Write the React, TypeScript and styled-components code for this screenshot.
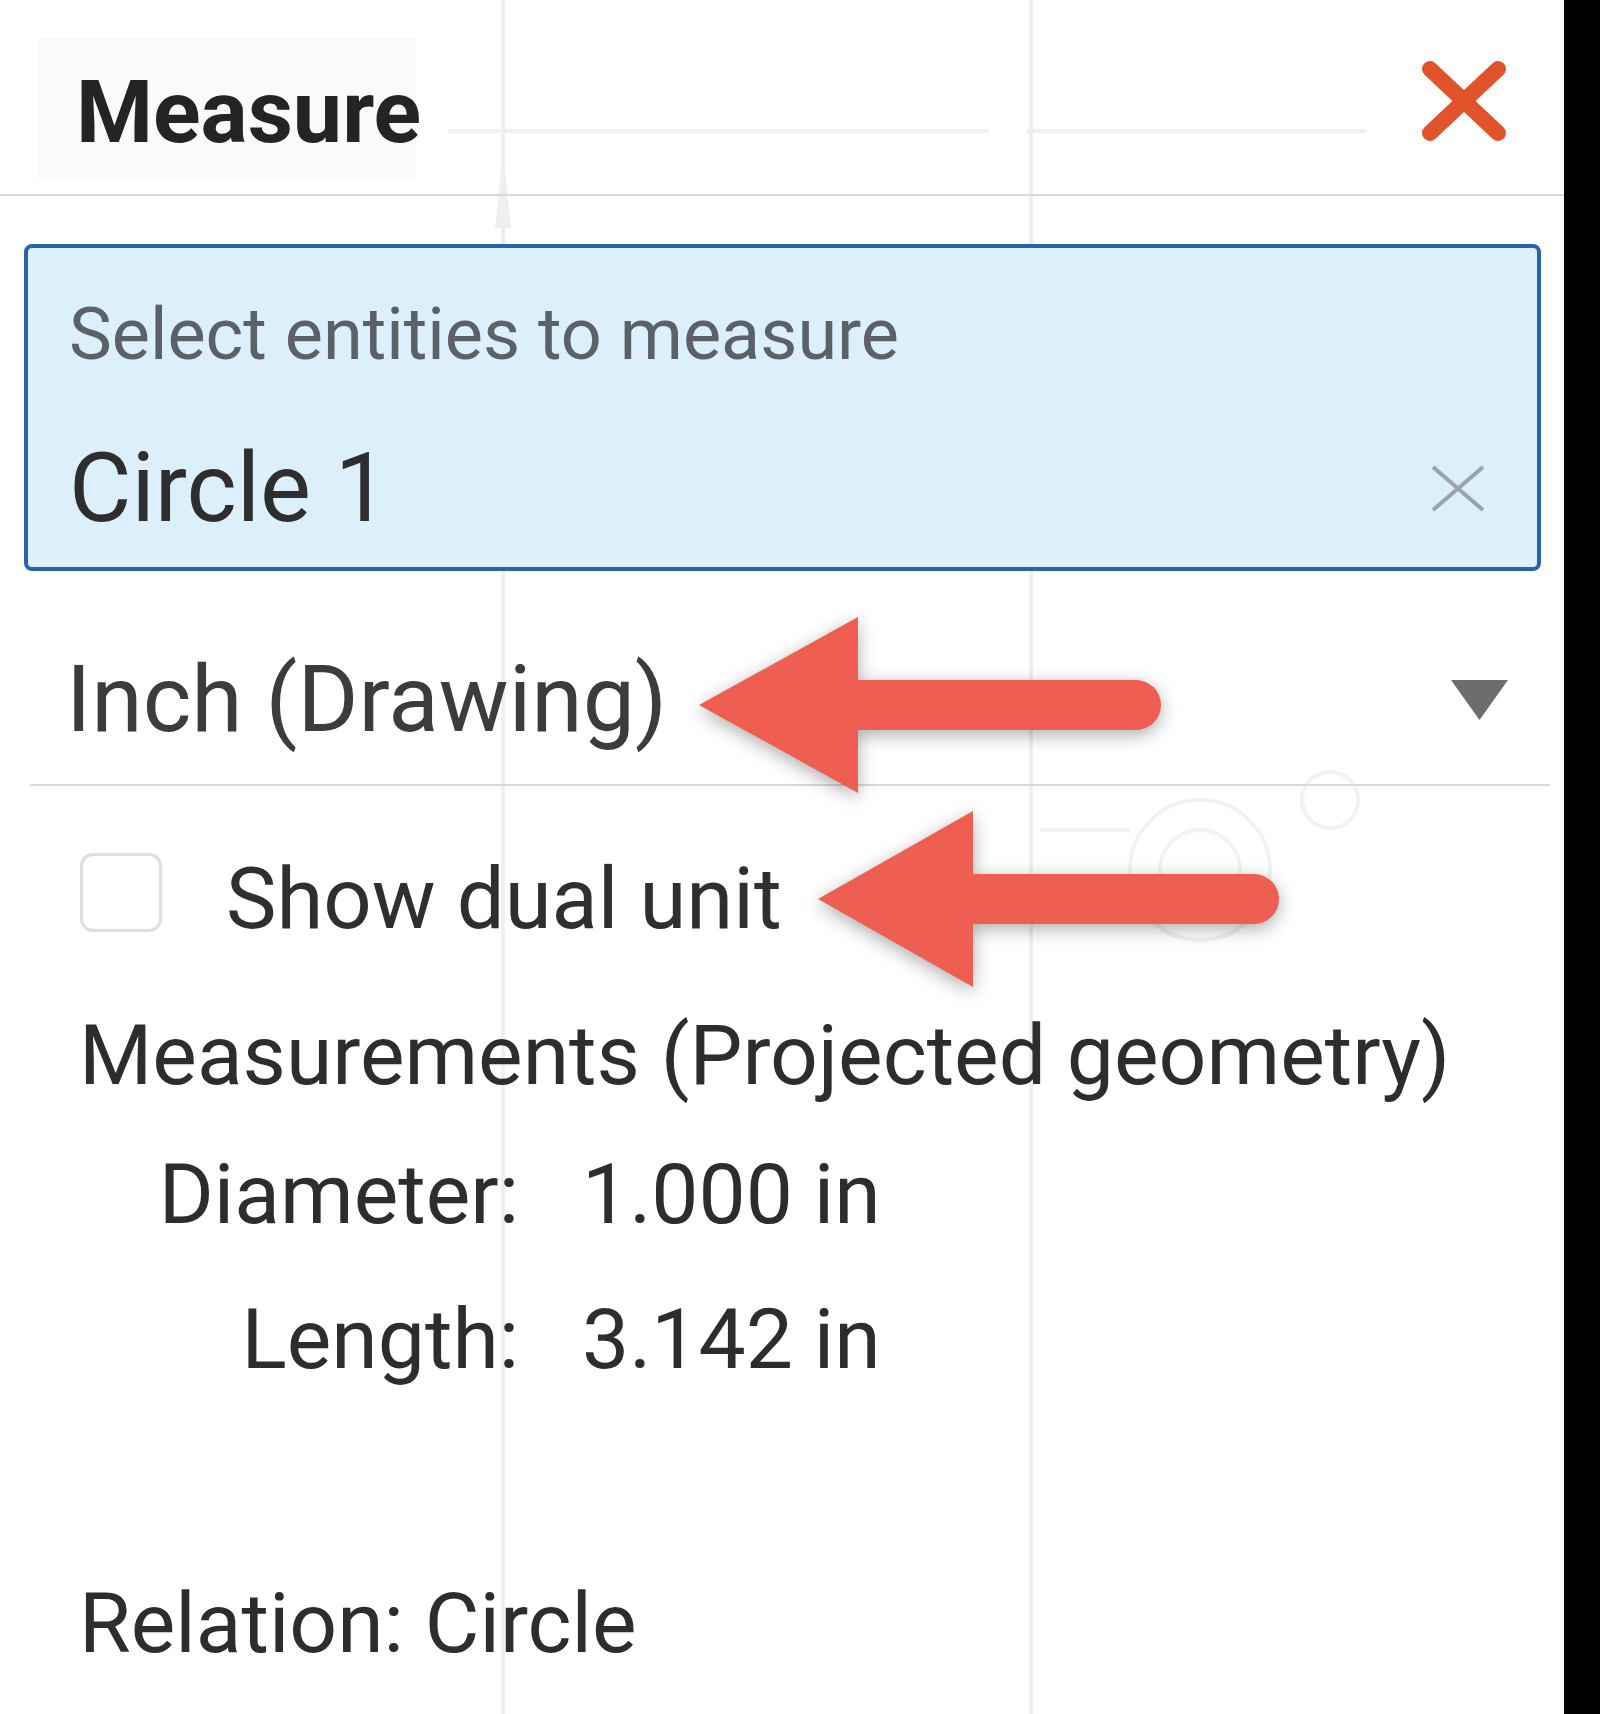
import * as React from "react"
import styled, { createGlobalStyle } from "styled-components"

const GlobalStyle = createGlobalStyle`
  html, body {
    margin: 0;
    padding: 0;
    background: #ffffff;
  }
  body {
    font-family: Roboto, "Noto Sans", "Liberation Sans", sans-serif;
    color: #2f2f2f;
  }
`

const Page = styled.div`
  display: flex;
  width: 1600px;
  height: 1714px;
  overflow: hidden;
`

const Panel = styled.div`
  position: relative;
  flex: 1;
  background: #ffffff;
`

const Edge = styled.div`
  width: 36px;
  background: #000000;
`

const Backdrop = styled.svg`
  position: absolute;
  inset: 0;
  width: 100%;
  height: 100%;
  pointer-events: none;
`

const Callouts = styled.svg`
  position: absolute;
  inset: 0;
  width: 100%;
  height: 100%;
  pointer-events: none;
  filter: drop-shadow(0 5px 9px rgba(0, 0, 0, 0.32));
`

const Content = styled.div`
  position: relative;
  display: flex;
  flex-direction: column;
`

const Header = styled.div`
  display: flex;
  justify-content: space-between;
  align-items: flex-start;
  height: 196px;
  padding: 62px 56px 0 76px;
  box-sizing: border-box;
  border-bottom: 2px solid #d6d8da;
`

const Title = styled.h1`
  margin: 0;
  font-size: 88px;
  line-height: 100px;
  font-weight: 700;
  color: #242424;
`

const CloseButton = styled.button`
  margin-top: -2px;
  padding: 0;
  border: 0;
  background: none;
  display: flex;
`

const SelectionBox = styled.div`
  margin: 48px 23px 0 24px;
  padding: 47px 52px 29px 41px;
  border: 4px solid #2763ae;
  border-radius: 8px;
  background: #dcf0fb;
  display: flex;
  flex-direction: column;
  gap: 63px;
`

const Hint = styled.div`
  font-size: 72px;
  line-height: 80px;
  color: #5b6166;
`

const SelectionRow = styled.div`
  display: flex;
  justify-content: space-between;
  align-items: center;
`

const Entity = styled.div`
  font-size: 96px;
  line-height: 100px;
  color: #2e2e2e;
`

const UnitSelect = styled.div`
  margin: 79px 14px 0 30px;
  padding: 0 42px 34px 36px;
  border-bottom: 2px solid #d9d9d9;
  display: flex;
  justify-content: space-between;
  align-items: center;
`

const UnitLabel = styled.div`
  font-size: 93px;
  line-height: 100px;
  color: #3c3c3c;
`

const CheckRow = styled.label`
  margin: 59px 0 0 80px;
  display: flex;
  align-items: center;
  gap: 64px;
`

const Checkbox = styled.span`
  width: 82px;
  height: 79px;
  box-sizing: border-box;
  border: 3px solid #dedede;
  border-radius: 13px;
  background: #ffffff;
`

const CheckLabel = styled.span`
  margin-top: 14px;
  font-size: 85px;
  line-height: 80px;
  color: #2f2f2f;
`

const SectionTitle = styled.div<{ $top: number }>`
  margin: ${p => p.$top}px 0 0 79px;
  font-size: 84px;
  line-height: 96px;
  color: #2d2d2d;
`

const MeasureGrid = styled.div`
  margin: 43px 0 0 140px;
  display: grid;
  grid-template-columns: 379px auto;
  column-gap: 63px;
  row-gap: 49px;
  font-size: 84px;
  line-height: 96px;
  color: #2d2d2d;
`

const MeasureLabel = styled.div`
  justify-self: end;
`

const MeasureValue = styled.div``

const measurements = [
  { label: "Diameter:", value: "1.000 in" },
  { label: "Length:", value: "3.142 in" },
]

const Arrow = ({ tipX, tipY, headX, headHalf, tailX, shaft }: {
  tipX: number
  tipY: number
  headX: number
  headHalf: number
  tailX: number
  shaft: number
}) => {
  const h = shaft / 2
  return (
    <g fill="#ee5f51">
      <polygon points={`${tipX},${tipY} ${headX},${tipY - headHalf} ${headX},${tipY + headHalf}`} />
      <rect x={headX - 2} y={tipY - h} width={tailX - headX + 2} height={shaft} rx={h} />
      <rect x={headX - 2} y={tipY - h} width={shaft} height={shaft} />
    </g>
  )
}

export default function App() {
  return (
    <>
      <GlobalStyle />
      <Page>
        <Panel>
          <Backdrop viewBox="0 0 1564 1714">
            <g stroke="#efefef" strokeWidth="4" fill="none">
              <rect x="38" y="38" width="378" height="142" fill="#fafafa" stroke="none" />
              <line x1="503" y1="0" x2="503" y2="1714" />
              <line x1="1031" y1="0" x2="1031" y2="1714" />
              <line x1="448" y1="131" x2="989" y2="131" />
              <line x1="1027" y1="131" x2="1366" y2="131" />
              <polygon points="503,150 495,228 511,228" fill="#efefef" stroke="none" />
            </g>
            <g stroke="#f2f2f2" strokeWidth="4" fill="none">
              <circle cx="1200" cy="870" r="70" />
              <circle cx="1200" cy="870" r="40" />
              <circle cx="1330" cy="800" r="28" />
              <line x1="1040" y1="830" x2="1130" y2="830" />
            </g>
          </Backdrop>
          <Content>
            <Header>
              <Title>Measure</Title>
              <CloseButton aria-label="Close">
                <svg width="88" height="82" viewBox="0 0 88 82">
                  <g stroke="#e0532b" strokeWidth="16" strokeLinecap="round">
                    <line x1="10" y1="9" x2="78" y2="73" />
                    <line x1="78" y1="9" x2="10" y2="73" />
                  </g>
                </svg>
              </CloseButton>
            </Header>
            <SelectionBox>
              <Hint>Select entities to measure</Hint>
              <SelectionRow>
                <Entity>Circle 1</Entity>
                <svg width="54" height="47" viewBox="0 0 54 47">
                  <g stroke="#9ba4aa" strokeWidth="4">
                    <line x1="2" y1="2" x2="52" y2="45" />
                    <line x1="52" y1="2" x2="2" y2="45" />
                  </g>
                </svg>
              </SelectionRow>
            </SelectionBox>
            <UnitSelect>
              <UnitLabel>Inch (Drawing)</UnitLabel>
              <svg width="57" height="40" viewBox="0 0 57 40">
                <polygon points="0,0 57,0 28.5,40" fill="#6d6d6d" />
              </svg>
            </UnitSelect>
            <CheckRow>
              <Checkbox />
              <CheckLabel>Show dual unit</CheckLabel>
            </CheckRow>
            <SectionTitle $top={69}>Measurements (Projected geometry)</SectionTitle>
            <MeasureGrid>
              {measurements.map(m => (
                <React.Fragment key={m.label}>
                  <MeasureLabel>{m.label}</MeasureLabel>
                  <MeasureValue>{m.value}</MeasureValue>
                </React.Fragment>
              ))}
            </MeasureGrid>
            <SectionTitle $top={188}>Relation: Circle</SectionTitle>
          </Content>
          <Callouts viewBox="0 0 1564 1714">
            <Arrow tipX={699} tipY={705} headX={858} headHalf={88} tailX={1161} shaft={50} />
            <Arrow tipX={818} tipY={899} headX={973} headHalf={88} tailX={1279} shaft={50} />
          </Callouts>
        </Panel>
        <Edge />
      </Page>
    </>
  )
}
